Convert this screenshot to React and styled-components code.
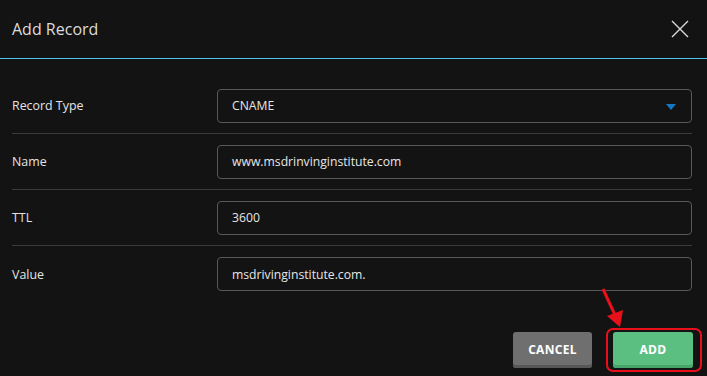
import React from 'react';
import styled, { createGlobalStyle } from 'styled-components';

const GlobalStyle = createGlobalStyle`
  html, body {
    margin: 0;
    padding: 0;
    background: #131313;
  }
  body {
    font-family: "Open Sans", "Liberation Sans", sans-serif;
  }
`;

const Modal = styled.div`
  width: 707px;
  height: 376px;
  background: #131313;
  color: #e2e2e2;
  display: flex;
  flex-direction: column;
  box-sizing: border-box;
`;

const Header = styled.div`
  height: 58px;
  border-bottom: 1px solid #4fc0f2;
  display: flex;
  align-items: center;
  justify-content: space-between;
  padding: 0 17px 0 12px;
  box-sizing: content-box;
`;

const Title = styled.h2`
  margin: 0;
  font-size: 16px;
  font-weight: 400;
  color: #dcdcdc;
`;

const CloseBtn = styled.button`
  background: none;
  border: none;
  padding: 0;
  width: 20px;
  height: 20px;
  display: flex;
  cursor: pointer;
`;

const Body = styled.div`
  padding: 19px 15px 0 12px;
`;

const Row = styled.div`
  display: grid;
  grid-template-columns: 205px 1fr;
  align-items: center;
  height: 56px;
  box-sizing: border-box;
  border-bottom: ${p => (p.$last ? 'none' : '1px solid #3a3a3a')};
`;

const Label = styled.label`
  font-size: 12.4px;
  font-weight: 500;
  color: #e4e4e4;
`;

const Field = styled.div`
  position: relative;
  height: 34px;
  box-sizing: border-box;
  border: 1px solid #585858;
  border-radius: 4px;
  display: flex;
  align-items: center;
  padding: 0 14px;
  font-size: 12.2px;
  color: #e6e6e6;
`;

const Caret = styled.span`
  position: absolute;
  right: 15px;
  top: 14px;
  width: 0;
  height: 0;
  border-left: 5.5px solid transparent;
  border-right: 5.5px solid transparent;
  border-top: 6px solid #1479c4;
`;

const Footer = styled.div`
  display: flex;
  justify-content: flex-end;
  gap: 21px;
  padding: 30px 14px 0 0;
`;

const Button = styled.button`
  width: ${p => p.$w}px;
  height: 36px;
  border: none;
  border-radius: 3px;
  background: ${p => p.$bg};
  box-shadow: inset 0 -3px 0 ${p => p.$shade};
  color: #fff;
  font-family: "Open Sans", "Liberation Sans", sans-serif;
  font-size: 12px;
  font-weight: 700;
  letter-spacing: 0.3px;
  padding: 0 0 2px;
  cursor: pointer;
`;

const AddWrap = styled.div`
  position: relative;
`;

const Highlight = styled.span`
  position: absolute;
  top: -4px;
  left: -7px;
  right: -9px;
  bottom: -4px;
  border: 2.5px solid #e8111b;
  border-radius: 7px;
  pointer-events: none;
`;

const Arrow = styled.svg`
  position: absolute;
  left: -14px;
  top: -46px;
  overflow: visible;
  pointer-events: none;
`;

const rows = [
  { label: 'Record Type', value: 'CNAME', select: true },
  { label: 'Name', value: 'www.msdrinvinginstitute.com' },
  { label: 'TTL', value: '3600' },
  { label: 'Value', value: 'msdrivinginstitute.com.' },
];

export default function App() {
  return (
    <>
      <GlobalStyle />
      <Modal>
        <Header>
          <Title>Add Record</Title>
          <CloseBtn aria-label="close">
            <svg width="20" height="20" viewBox="0 0 20 20">
              <path d="M2 2 L18 18 M18 2 L2 18" stroke="#d8d8d8" strokeWidth="1.4" fill="none" />
            </svg>
          </CloseBtn>
        </Header>
        <Body>
          {rows.map((r, i) => (
            <Row key={r.label} $last={i === rows.length - 1}>
              <Label>{r.label}</Label>
              <Field>
                {r.value}
                {r.select && <Caret />}
              </Field>
            </Row>
          ))}
        </Body>
        <Footer>
          <Button $w={79} $bg="#6f6f6f" $shade="#575757">CANCEL</Button>
          <AddWrap>
            <Button $w={80} $bg="#5cbf82" $shade="#47a56b">ADD</Button>
            <Highlight />
            <Arrow width="30" height="46" viewBox="0 0 30 46">
              <path d="M4 3 L16 29" stroke="#e8111b" strokeWidth="3" fill="none" />
              <path d="M21 41 L8 30 L24 24 Z" fill="#e8111b" />
            </Arrow>
          </AddWrap>
        </Footer>
      </Modal>
    </>
  );
}
